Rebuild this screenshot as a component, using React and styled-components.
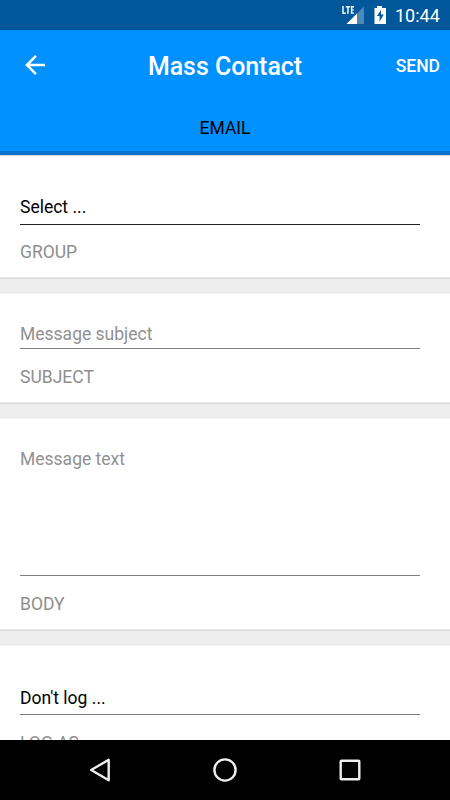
import React from "react";
import styled, { createGlobalStyle } from "styled-components";

const GlobalStyle = createGlobalStyle`
  * { box-sizing: border-box; }
  body { margin: 0; background: #fff; font-family: Roboto, "Noto Sans", sans-serif; }
`;

const Screen = styled.div`
  width: 450px;
  height: 800px;
  display: flex;
  flex-direction: column;
  overflow: hidden;
  background: #fff;
`;

const StatusBar = styled.div`
  flex: none;
  height: 30px;
  padding-right: 10px;
  display: flex;
  align-items: center;
  justify-content: flex-end;
  background: #005799;
  color: #fff;
`;

const StatusIcons = styled.svg`
  display: block;
  margin-right: 7px;
`;

const Clock = styled.span`
  width: 45px;
  font-size: 18px;
  line-height: 30px;
  padding-top: 1px;
  white-space: nowrap;
`;

const Header = styled.header`
  flex: none;
  height: 125px;
  display: flex;
  flex-direction: column;
  background: #0091ff;
  border-bottom: 4px solid #0074cc;
  box-shadow: 0 1px 1px #d5d5d5;
`;

const TitleRow = styled.div`
  height: 70px;
  padding: 0 10px 0 20px;
  display: grid;
  grid-template-columns: 50px 1fr 60px;
  align-items: center;
  color: #fff;
`;

const BackButton = styled.button`
  width: 30px;
  height: 30px;
  padding: 0;
  border: 0;
  background: none;
  color: inherit;
  svg { display: block; }
`;

const Title = styled.h1`
  margin: 3px 0 0;
  font-size: 24.9px;
  font-weight: 500;
  line-height: 30px;
  text-align: center;
  white-space: nowrap;
`;

const SendButton = styled.button`
  display: flex;
  justify-content: flex-end;
  padding: 1px 0 0;
  border: 0;
  background: none;
  color: #fff;
  font: 500 17.5px/24px Roboto, sans-serif;
`;

const Tab = styled.div`
  height: 51px;
  padding-top: 16px;
  font-size: 17.5px;
  line-height: 24px;
  text-align: center;
  color: #000;
`;

const Form = styled.main`
  flex: 1;
  min-height: 0;
  overflow: hidden;
`;

const Section = styled.section`
  height: ${(p) => p.$height}px;
  padding: ${(p) => p.$top}px 30px 0 20px;
`;

const Divider = styled.div`
  height: 17px;
  border-top: 1px solid #e9e9e9;
  border-bottom: 1px solid #f3f3f3;
  background: #ededed;
  box-shadow: inset 0 1px 0 #dadada;
`;

const Value = styled.div`
  height: ${(p) => p.$height}px;
  border-bottom: 1px solid ${(p) => p.$line || "#7c7c7c"};
  font-size: 17.5px;
  line-height: 24px;
  color: ${(p) => (p.$hint ? "#919191" : "#000")};
`;

const Label = styled.div`
  margin-top: ${(p) => p.$gap}px;
  font-size: 17.5px;
  line-height: 24px;
  color: #8e8e8e;
`;

const NavBar = styled.nav`
  flex: none;
  height: 60px;
  padding: 0 85px;
  display: flex;
  align-items: center;
  justify-content: space-between;
  background: #000;
  svg { display: block; }
`;

const fields = [
  { label: "GROUP", value: "Select ...", height: 122, top: 40, box: 30, gap: 15, line: "#222" },
  { label: "SUBJECT", value: "Message subject", hint: true, height: 108, top: 28, box: 27, gap: 16 },
  { label: "BODY", value: "Message text", hint: true, height: 210, top: 28, box: 129, gap: 16 },
  { label: "LOG AS", value: "Don't log ...", height: 123, top: 40, box: 29, gap: 16 },
];

export default function App() {
  return (
    <Screen>
      <GlobalStyle />
      <StatusBar>
        <StatusIcons width="48" height="30" viewBox="0 0 48 30" fill="none">
          <path d="M3 6V13.200H5.800M5.700 6.700H10.200M7.950 6.700V13.700M14 6.700H11.600V13.100H14M11.600 9.900H13.700" stroke="#fff" strokeWidth="1.4" />
          <path d="M24 6.5V24H6.5L15 15.5H17V13.5Z" fill="#4d89b8" />
          <path d="M17 13.5V24H6.5Z" fill="#fff" />
          <path d="M37 6h5v2h4v16H34.500V8h2.500Z" fill="#fff" />
          <path d="M41 10l-4 6h2.600v5.500l4.200-7h-2.800Z" fill="#005799" />
        </StatusIcons>
        <Clock>10:44</Clock>
      </StatusBar>
      <Header>
        <TitleRow>
          <BackButton aria-label="Back">
            <svg width="30" height="30" viewBox="0 0 30 30" fill="none" stroke="#fff" strokeWidth="2.5">
              <path d="M25 15H7M16 5.900L6.900 15L16 24.100" />
            </svg>
          </BackButton>
          <Title>Mass Contact</Title>
          <SendButton>SEND</SendButton>
        </TitleRow>
        <Tab>EMAIL</Tab>
      </Header>
      <Form>
        {fields.map((f, i) => (
          <React.Fragment key={f.label}>
            {i > 0 && <Divider />}
            <Section $height={f.height} $top={f.top}>
              <Value $height={f.box} $hint={f.hint} $line={f.line}>{f.value}</Value>
              <Label $gap={f.gap}>{f.label}</Label>
            </Section>
          </React.Fragment>
        ))}
      </Form>
      <NavBar>
        <svg width="30" height="30" viewBox="0 0 30 30" fill="none" stroke="#eee" strokeWidth="2.4" strokeLinejoin="round">
          <path d="M23.700 4.800V25.200L6.200 15Z" />
        </svg>
        <svg width="30" height="30" viewBox="0 0 30 30" fill="none" stroke="#eee" strokeWidth="2.4">
          <circle cx="15" cy="15" r="10.600" />
        </svg>
        <svg width="30" height="30" viewBox="0 0 30 30" fill="none" stroke="#eee" strokeWidth="2.4">
          <rect x="5.700" y="5.700" width="18.600" height="18.600" rx="0.8" />
        </svg>
      </NavBar>
    </Screen>
  );
}
